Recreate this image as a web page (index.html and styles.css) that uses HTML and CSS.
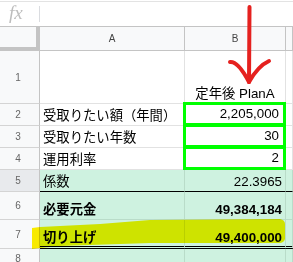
FILE: index.html
```html
<!DOCTYPE html>
<html lang="ja">
<head>
<meta charset="utf-8">
<link rel="stylesheet" href="styles.css">
</head>
<body>
<div class="page">
  <div class="formula">
    <span class="fx">fx</span>
    <span class="fsep"></span>
  </div>
  <div class="sheet">
    <div class="corner"></div>
    <div class="colhead">A</div>
    <div class="colhead">B</div>
    <div class="colhead"></div>

    <div class="rowhead">1</div>
    <div class="cell"></div>
    <div class="cell center">定年後 PlanA</div>
    <div class="cell"></div>

    <div class="rowhead">2</div>
    <div class="cell">受取りたい額（年間）</div>
    <div class="cell num boxed">2,205,000</div>
    <div class="cell"></div>

    <div class="rowhead">3</div>
    <div class="cell">受取りたい年数</div>
    <div class="cell num boxed">30</div>
    <div class="cell"></div>

    <div class="rowhead">4</div>
    <div class="cell">運用利率</div>
    <div class="cell num boxed">2</div>
    <div class="cell"></div>

    <div class="rowhead sel">5</div>
    <div class="cell mint line">係数</div>
    <div class="cell mint line num">22.3965</div>
    <div class="cell mint line"></div>

    <div class="rowhead">6</div>
    <div class="cell mint bold">必要元金</div>
    <div class="cell mint bold num">49,384,184</div>
    <div class="cell mint"></div>

    <div class="rowhead">7</div>
    <div class="cell mint dbl bold">切り上げ</div>
    <div class="cell mint dbl bold num">49,400,000</div>
    <div class="cell mint dbl"></div>

    <div class="rowhead">8</div>
    <div class="cell mint"></div>
    <div class="cell mint"></div>
    <div class="cell mint"></div>
  </div>
  <svg class="overlay highlight" width="293" height="262" viewBox="0 0 293 262">
    <path d="M32 228 L40 227 L100 224 L150 220 L280 219 Q285 220 285 224 L285 239 Q284 243 279 243 L150 243 L60 246 L40 248 L32 249 Z" fill="#fff000"/>
  </svg>
  <svg class="overlay arrow" width="293" height="262" viewBox="0 0 293 262">
    <g fill="none" stroke="#e5211f" stroke-width="4" stroke-linecap="round" stroke-linejoin="round">
      <path d="M249.5 7 L249 82"/>
      <path d="M230 62 Q238 61 249 82"/>
      <path d="M269 61 Q258 66 249 82"/>
    </g>
  </svg>
</div>
</body>
</html>
```

FILE: styles.css
```css
html, body {
  margin: 0;
  padding: 0;
  background: #fff;
}

.page {
  position: relative;
  width: 293px;
  height: 262px;
  overflow: hidden;
  font-family: "Liberation Sans", "Noto Sans CJK JP", sans-serif;
}

.formula {
  box-sizing: border-box;
  height: 26px;
  margin-top: 1px;
  border-top: 1px solid #e3e3e3;
  border-bottom: 1px solid #c4c4c4;
  display: flex;
  align-items: center;
}

.fx {
  width: 30px;
  padding-left: 9px;
  box-sizing: border-box;
  font-family: "Liberation Serif", serif;
  font-style: italic;
  font-size: 19px;
  line-height: 20px;
  color: #bdbdbd;
  margin-top: -2px;
}

.fsep {
  width: 1px;
  height: 16px;
  margin-left: 9px;
  background: #dadce0;
}

.sheet {
  display: grid;
  grid-template-columns: 40px 145px 101px 1fr;
  grid-template-rows: 24px 53px 22px 22px 22px 22px 28px 29px 20px;
}

.sheet > div {
  box-sizing: border-box;
  min-width: 0;
}

.corner {
  background: #f8f9fa;
  border-right: 4px solid #c4c4c4;
  border-bottom: 4px solid #c4c4c4;
}

.colhead {
  background: #f8f9fa;
  border-right: 1px solid #c4c4c4;
  border-bottom: 1px solid #c4c4c4;
  display: flex;
  align-items: center;
  justify-content: center;
  font-family: "Liberation Sans", sans-serif;
  font-size: 10px;
  color: #444;
}

.rowhead {
  background: #f8f9fa;
  border-right: 1px solid #c4c4c4;
  border-bottom: 1px solid #d4d4d4;
  display: flex;
  align-items: center;
  justify-content: center;
  padding-right: 3px;
  font-family: "Liberation Sans", sans-serif;
  font-size: 10px;
  color: #666;
}

.rowhead.sel {
  background: #e8eaed;
}

.cell {
  background: #fff;
  border-right: 1px solid #e2e2e2;
  border-bottom: 1px solid #e2e2e2;
  display: flex;
  align-items: flex-end;
  padding: 0 3px 2px 3px;
  font-size: 13.33px;
  line-height: 15px;
  color: #000;
  white-space: nowrap;
}

.cell.center {
  justify-content: center;
}

.cell.num {
  justify-content: flex-end;
}

.cell.boxed {
  position: relative;
  padding-right: 6px;
  padding-bottom: 4px;
}

.cell.boxed::after {
  content: "";
  position: absolute;
  left: -2px;
  top: -2px;
  right: -1px;
  bottom: -1px;
  border: 3px solid #00ff00;
  z-index: 1;
}

.cell.mint {
  background: #cef2e0;
  border-right-color: #b9dcc9;
  border-bottom-color: #b9dcc9;
}

.cell.line {
  border-bottom: 1px solid #000;
}

.cell.dbl {
  border-bottom: 3px double #000;
  padding-bottom: 1px;
}

.cell.bold {
  font-weight: 700;
}

.overlay {
  position: absolute;
  left: 0;
  top: 0;
  pointer-events: none;
}

.highlight {
  mix-blend-mode: multiply;
}
```
